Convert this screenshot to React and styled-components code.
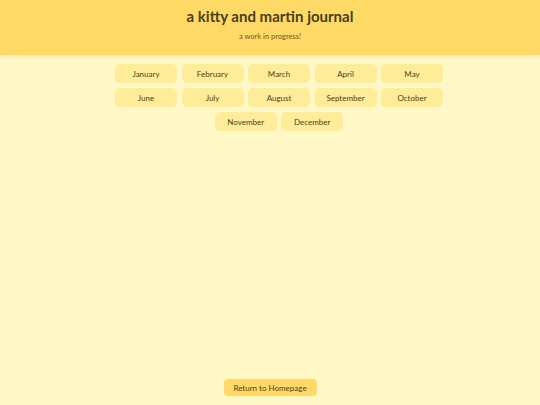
import React from 'react';
import styled, { createGlobalStyle } from 'styled-components';

const GlobalStyle = createGlobalStyle`
  html, body {
    margin: 0;
    padding: 0;
  }
  body {
    background: #fff8c6;
    font-family: Lato, "Noto Sans", sans-serif;
    color: #4d4120;
  }
`;

const Page = styled.div`
  min-height: 100vh;
  display: flex;
  flex-direction: column;
`;

const Header = styled.header`
  background: #ffd966;
  height: 55px;
  box-sizing: border-box;
  padding-top: 6px;
  text-align: center;
  box-shadow: 0 2px 3px rgba(230, 200, 100, 0.35);
`;

const Title = styled.h1`
  margin: 0;
  font-size: 15px;
  font-weight: 700;
  line-height: 20px;
  color: #4a3d1c;
`;

const Subtitle = styled.p`
  margin: 6px 0 0;
  font-size: 7.5px;
  line-height: 10px;
  color: #6b5a2a;
`;

const Months = styled.main`
  flex: 1;
  display: flex;
  flex-wrap: wrap;
  justify-content: center;
  align-content: flex-start;
  gap: 5px 4.5px;
  width: 330px;
  padding-left: 18px;
  margin: 9px auto 0;
`;

const MonthButton = styled.button`
  width: 62px;
  height: 19px;
  border: none;
  border-radius: 5px;
  background: #ffec99;
  font-family: inherit;
  font-size: 8px;
  color: #4d4120;
  padding: 0;
  cursor: pointer;
`;

const Footer = styled.footer`
  display: flex;
  justify-content: center;
  padding-bottom: 9px;
`;

const ReturnButton = styled.button`
  width: 93px;
  height: 17px;
  border: none;
  border-radius: 4px;
  background: #ffd966;
  font-family: inherit;
  font-size: 8px;
  color: #4d4120;
  padding: 0;
  cursor: pointer;
`;

const months = [
  'January', 'February', 'March', 'April', 'May',
  'June', 'July', 'August', 'September', 'October',
  'November', 'December',
];

export default function App() {
  return (
    <Page>
      <GlobalStyle />
      <Header>
        <Title>a kitty and martin journal</Title>
        <Subtitle>a work in progress!</Subtitle>
      </Header>
      <Months>
        {months.map((m) => (
          <MonthButton key={m}>{m}</MonthButton>
        ))}
      </Months>
      <Footer>
        <ReturnButton>Return to Homepage</ReturnButton>
      </Footer>
    </Page>
  );
}
